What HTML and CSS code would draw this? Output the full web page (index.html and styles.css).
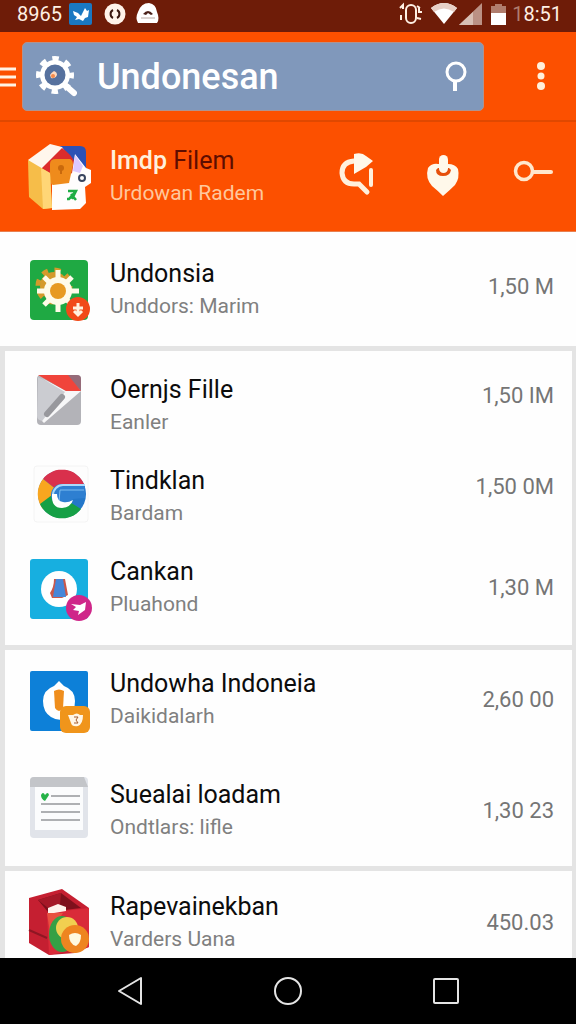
FILE: index.html
```html
<!DOCTYPE html>
<html lang="id">
<head>
<meta charset="utf-8">
<meta name="viewport" content="width=device-width, initial-scale=1">
<title>Undonesan</title>
<link rel="stylesheet" href="styles.css">
</head>
<body>
<div class="status">
  <span class="clock">8965</span>
  <svg class="status-left" width="92" height="26" viewBox="0 0 92 26" aria-hidden="true">
    <rect x="1" y="2" width="23" height="22" rx="2" fill="#1a78c2"/>
    <path d="M5 10l5 2 3 3 4-8 2 3 2-1-1 7-3 1-2 3-4-2-4 1 2-3-3-2z" fill="#fff"/>
    <circle cx="47" cy="13" r="10.500" fill="#fff3ea"/>
    <path d="M45 9a4.500 4.500 0 0 0 0 8M49 9a4.500 4.500 0 0 1 0 8" fill="none" stroke="#3a1810" stroke-width="2"/>
    <path d="M70 22q-3-5 0-11 3-9 11-9 7 1 8 9 3 7 0 11z" fill="#fff"/>
    <path d="M75 13q5-6 10 0l-2 1-3-2-2 2z" fill="#4a2018"/><path d="M73 17h14" stroke="#b8a8a2"/>
  </svg>
  <svg class="status-right" width="110" height="26" viewBox="0 0 110 26" aria-hidden="true">
    <g fill="none" stroke="#fff0e4" stroke-width="2"><rect x="9" y="4" width="10" height="18" rx="5"/><path d="M3 7l3-3v4M4 14v5M20 5l3 2M21 11h4M20 17l4 1M22 7v4"/></g>
    <path d="M34 7q13-10 26 0L47 23z" fill="#fff"/><path d="M34 7q13-10 26 0l-3 4q-10-7-20 0z" fill="#e8d0c6"/>
    <path d="M62 24L85 2v22z" fill="#bb9184"/><path d="M62 24l14-13v13z" fill="#d8bfb4"/>
    <path d="M94 5h4V3h7v2h4v19H94z" fill="#b07d6d"/><path d="M94 12h15v12H94z" fill="#fff"/>
  </svg>
  <span class="clock"><span class="faint">1</span>8:51</span>
</div>

<header class="appbar">
  <button class="menu" type="button" aria-label="Menu">
    <svg width="16" height="24" viewBox="0 0 16 24"><path d="M0 5h16M0 13h16M0 21h16" stroke="#fff3e4" stroke-width="3"/></svg>
  </button>
  <form class="search">
    <svg width="42" height="42" viewBox="0 0 42 42" aria-hidden="true">
      <circle cx="20" cy="20" r="12.500" fill="none" stroke="#fff" stroke-width="5"/>
      <circle cx="20" cy="20" r="16.500" fill="none" stroke="#fff" stroke-width="5" stroke-dasharray="6.500 6.460" stroke-dashoffset="3.200"/>
      <circle cx="20" cy="20" r="10.500" fill="#56719e"/>
      <path d="M31 31l8 7" stroke="#fff" stroke-width="6" stroke-linecap="round"/>
      <path d="M15 20q1-2 4-4 3 1 3 4-2 4-6 3z" fill="#ffd9bd"/><circle cx="18" cy="21" r="2" fill="#f58a4a"/>
    </svg>
    <input class="query" type="text" value="Undonesan" aria-label="Search">
    <button class="plain" type="submit" aria-label="Search">
      <svg width="24" height="32" viewBox="0 0 24 32"><circle cx="13" cy="12" r="9" fill="none" stroke="#fff" stroke-width="3"/><path d="M12 21v10" stroke="#fff" stroke-width="4"/></svg>
    </button>
  </form>
  <button class="more" type="button" aria-label="More options">
    <svg width="12" height="32" viewBox="0 0 12 32" fill="#fff0dc"><circle cx="6" cy="6" r="4"/><circle cx="6" cy="16" r="3.500"/><circle cx="6" cy="26" r="4"/></svg>
  </button>
</header>

<section class="banner">
  <svg class="icon" viewBox="0 0 66 80" aria-hidden="true">
    <path d="M34 9h20q6 0 6 6v25H46z" fill="#2d51b5"/>
    <path d="M2 23L24 7l12 3 14 20-34 9z" fill="#fff6ec"/>
    <path d="M15 32L36 11q9 6 13 15l-3 18-22 3z" fill="#dc2c2c"/>
    <path d="M26 46l20-10 3-19 11 14 5 2v13l-6 4 1 16-6 6-28 1z" fill="#fffdfd"/>
    <path d="M49 18l8 11-3 7-7-2z" fill="#dcc8ff"/>
    <path d="M24 27q0-5 6-5h14q3 1 3 6l-4 18-16 2q-3-1-3-5z" fill="#ef8b1c"/>
    <path d="M2 23l22 13 2 35-9 1L3 60z" fill="#f6bd49"/><path d="M15 31l9 5 2 35-9 1z" fill="#ffd676"/>
    <circle cx="35" cy="31" r="3" fill="#c9690c"/><path d="M35 32v5" stroke="#c9690c" stroke-width="2"/>
    <circle cx="56" cy="41" r="3" fill="none" stroke="#39455f" stroke-width="2"/>
    <path d="M42 54h8l-4 8M50 54l-7 8h-2M45 57l5 6" fill="none" stroke="#20ad45" stroke-width="2.500"/>
  </svg>
  <div class="text">
    <h1 class="title light">Imdp <span class="dark">Filem</span></h1>
    <p class="sub pale">Urdowan Radem</p>
  </div>
  <div class="actions">
    <button class="plain" type="button" aria-label="Refresh search">
      <svg width="48" height="52" viewBox="0 0 48 52"><path d="M20 10q-12 1-12 12 1 11 12 11h5l8 8" fill="none" stroke="#fff0dc" stroke-width="5" stroke-linecap="round"/><path d="M20 3q8-2 12 2l7 5-7 6-12 7z" fill="#fff8ea"/><path d="M37 19v15" stroke="#fff0dc" stroke-width="4" stroke-linecap="round"/></svg>
    </button>
    <button class="plain" type="button" aria-label="Install">
      <svg width="48" height="52" viewBox="0 0 48 52"><path d="M6 17q4-5 10-4h10q7 0 10 5 2 9-3 16-5 5-12 11-6-6-11-10-7-8-4-18z" fill="#fff8ea"/><path d="M14 19q0 6 7 6t8-6l-2-2h-11z" fill="#e64f0b"/><rect x="17" y="4" width="9" height="18" rx="4.500" fill="#fff8ea"/></svg>
    </button>
    <button class="plain" type="button" aria-label="Key">
      <svg width="48" height="52" viewBox="0 0 48 52"><circle cx="14" cy="20" r="8.500" fill="none" stroke="#ffe7cd" stroke-width="3.500"/><path d="M23 21h18" stroke="#ffe7cd" stroke-width="4" stroke-linecap="round"/></svg>
    </button>
  </div>
</section>

<main class="list">
  <ul class="card full">
    <li class="row">
      <svg class="icon" viewBox="0 0 66 80" aria-hidden="true">
        <rect x="4" y="10" width="58" height="60" rx="4" fill="#1fa943"/>
        <circle cx="28" cy="36" r="14" fill="#d59a2b"/><circle cx="28" cy="36" r="16" fill="none" stroke="#d59a2b" stroke-width="5" stroke-dasharray="6 6.560"/>
        <circle cx="32" cy="41" r="14" fill="#fffbe9"/>
        <path d="M32 20v42M11 41h42M18 27l28 28M46 27L18 55" stroke="#fffbe9" stroke-width="5"/>
        <circle cx="32" cy="41" r="8" fill="#e79a22"/>
        <circle cx="52" cy="59" r="12" fill="#f14a18"/><path d="M52 53v10M47 58h10M48 61l4 4 4-4" stroke="#fff2df" stroke-width="3" fill="none"/>
      </svg>
      <div class="text"><h2 class="title">Undonsia</h2><p class="sub">Unddors: Marim</p></div>
      <span class="price lifted">1,50 M</span>
    </li>
  </ul>

  <ul class="card tight">
    <li class="row">
      <svg class="icon" viewBox="0 0 66 80" aria-hidden="true">
        <rect x="11" y="9" width="44" height="50" rx="4" fill="#b3b3b8"/>
        <path d="M12 11l31 15-27 29q-5-1-5-5z" fill="#cbccd1"/>
        <path d="M12 10l28 15h15L18 57l-2-2 23-29z" fill="#f7f7f8"/>
        <path d="M21 48l15-17" stroke="#98989d" stroke-width="6" stroke-linecap="round"/>
        <path d="M40 9h11q4 0 4 4v12z" fill="#956b79"/><path d="M12 9h30l13 16H40z" fill="#f0443b"/>
      </svg>
      <div class="text"><h2 class="title">Oernjs Fille</h2><p class="sub">Eanler</p></div>
      <span class="price raised">1,50 IM</span>
    </li>
    <li class="row">
      <svg class="icon" viewBox="0 0 66 80" aria-hidden="true">
        <rect x="8" y="9" width="54" height="56" rx="3" fill="#fdfdfd" stroke="#f4f4f4"/>
        <circle cx="36" cy="37" r="24" fill="#2477c9"/>
        <path d="M36 37L17 22a24 24 0 0 1 41 5H36z" fill="#d9304c"/>
        <path d="M36 37L17 22a24 24 0 0 0 0 30z" fill="#f9a61f"/>
        <path d="M26 38L14 47a24 24 0 0 0 41 5L42 44z" fill="#16a046"/>
        <path d="M59 27H36a11 11 0 0 0 0 22q8 0 11-7l12-1z" fill="#2e7fd1"/>
        <path d="M59 28H37a10 10 0 0 0-10 10" fill="none" stroke="#a9dafa" stroke-width="2"/>
        <path d="M33 45l1-12h24" fill="none" stroke="#7cbdf0"/>
        <path d="M26 37q-1 14 10 14 9-1 11-8-5 3-10 2-6-1-6-8z" fill="#fff"/>
      </svg>
      <div class="text"><h2 class="title">Tindklan</h2><p class="sub">Bardam</p></div>
      <span class="price raised">1,50 0M</span>
    </li>
    <li class="row">
      <svg class="icon" viewBox="0 0 66 80" aria-hidden="true">
        <rect x="4" y="11" width="58" height="60" rx="3" fill="#17afe0"/>
        <circle cx="33" cy="41" r="18" fill="#fff"/>
        <path d="M28 31h11l3 16-6 3H26l-2-5q4-6 4-14z" fill="#cb5749"/><path d="M30 31h7l3 18H27z" fill="#4686d8"/>
        <circle cx="53" cy="60" r="13" fill="#cf2689"/><path d="M45 56l9 1 6-3-1 8-7 5 1-4-6-1 3-3z" fill="#fff"/>
      </svg>
      <div class="text"><h2 class="title">Cankan</h2><p class="sub">Pluahond</p></div>
      <span class="price">1,30 M</span>
    </li>
  </ul>

  <ul class="card loose">
    <li class="row">
      <svg class="icon" viewBox="0 0 66 80" aria-hidden="true">
        <rect x="4" y="11" width="58" height="60" rx="2" fill="#0d80d8"/>
        <path d="M33 21l5 5q11 4 11 15 0 12-8 17-8 4-16-1-8-5-8-16 0-11 11-15z" fill="#fff"/>
        <path d="M28 31q5-3 10 0l-1 17q-4 6-8 0z" fill="#ef8e1d"/>
        <rect x="34" y="46" width="30" height="27" rx="6" fill="#f0951b"/>
        <path d="M42 55h5q4-3 7 0h3q0 9-5 11-6 1-7-3z" fill="#fff6e6"/><path d="M48 57h4l-2 3 2 3h-4" fill="none" stroke="#a55c30"/>
      </svg>
      <div class="text"><h2 class="title">Undowha Indoneia</h2><p class="sub">Daikidalarh</p></div>
      <span class="price">2,60 00</span>
    </li>
    <li class="row">
      <svg class="icon" viewBox="0 0 66 80" aria-hidden="true">
        <rect x="4" y="6" width="58" height="61" rx="4" fill="#e1e4ea"/><path d="M8 6h50l4 10H4V10q0-4 4-4z" fill="#c3c5c9"/>
        <path d="M9 16h48v43H9z" fill="#fbfcfd"/>
        <path d="M25 25h29M15 33h39M15 41h39M15 49h39" stroke="#aeb0b3" stroke-width="2"/>
        <path d="M15 24q2-4 4 0 3-4 4 0l-4 6q-4-2-4-6z" fill="#25b348"/>
      </svg>
      <div class="text"><h2 class="title">Suealai loadam</h2><p class="sub">Ondtlars: lifle</p></div>
      <span class="price">1,30 23</span>
    </li>
  </ul>

  <ul class="card last">
    <li class="row">
      <svg class="icon" viewBox="0 0 66 80" aria-hidden="true">
        <path d="M3 15l33-9 27 19v39l-14 6-26 2L3 60z" fill="#c51f31"/>
        <path d="M21 30l42-5v39l-40 8z" fill="#d92b39"/><path d="M12 17l23-7 20 15-33 4z" fill="#7e101c"/>
        <path d="M12 17l23-7-1 12-12 3z" fill="#a51827"/><path d="M22 25l10-4 8 3v4l-18 3z" fill="#fff2ec"/>
        <path d="M3 47l18 8" stroke="#8f1623" stroke-width="2"/><path d="M21 30h16L24 50z" fill="#e8503f"/>
        <ellipse cx="36" cy="51" rx="13" ry="18" fill="#35a045"/><circle cx="41" cy="45" r="11" fill="#f1cf50"/>
        <circle cx="49" cy="56" r="14" fill="#ee8520"/><path d="M43 52q6-4 12 0 0 8-5 11-7-2-7-11z" fill="#fff9df"/>
      </svg>
      <div class="text"><h2 class="title">Rapevainekban</h2><p class="sub">Varders Uana</p></div>
      <span class="price">450.03</span>
    </li>
  </ul>
</main>

<nav class="nav">
  <button class="plain" type="button" aria-label="Back"><svg width="32" height="32" viewBox="0 0 32 32"><path d="M27 3v26L5 16z" fill="none" stroke="#e4e4e4" stroke-width="2" stroke-linejoin="round"/></svg></button>
  <button class="plain" type="button" aria-label="Home"><svg width="32" height="32" viewBox="0 0 32 32"><circle cx="16" cy="16" r="13" fill="none" stroke="#e4e4e4" stroke-width="2"/></svg></button>
  <button class="plain" type="button" aria-label="Recent apps"><svg width="32" height="32" viewBox="0 0 32 32"><rect x="4" y="4" width="24" height="24" rx="1" fill="none" stroke="#e4e4e4" stroke-width="2"/></svg></button>
</nav>
</body>
</html>
```
FILE: styles.css
```css
* {
  box-sizing: border-box;
}

body {
  margin: 0;
  height: 100vh;
  display: flex;
  flex-direction: column;
  overflow: hidden;
  font-family: Roboto, "Liberation Sans", sans-serif;
  background: #e4e4e4;
  color: #0c0c0c;
}

h1, h2, p, ul {
  margin: 0;
  padding: 0;
}

button {
  border: 0;
  padding: 0;
  background: none;
  cursor: pointer;
}

svg {
  display: block;
  flex: none;
}

.status {
  flex: none;
  display: flex;
  align-items: center;
  height: 32px;
  padding: 0 14px 4px 17px;
  background: #6e1c08;
  color: #fff0e4;
}

.clock {
  font-size: 20px;
  line-height: 26px;
}

.faint {
  color: #b07d6d;
}

.status-left {
  margin-left: 6px;
}

.status-right {
  margin-left: auto;
  margin-right: 5px;
}

.appbar {
  flex: none;
  display: flex;
  align-items: center;
  height: 90px;
  background: #fc5000;
  border-bottom: 2px solid #e04800;
}

.menu {
  margin-right: 6px;
}

.search {
  flex: 1;
  min-width: 0;
  display: flex;
  align-items: center;
  height: 69px;
  padding: 0 16px 0 12px;
  background: #8098bb;
  border: 1px solid #b0938f;
  border-radius: 5px;
}

.query {
  flex: 1;
  min-width: 0;
  margin-left: 20px;
  padding: 2px 0 0;
  border: 0;
  outline: 0;
  background: none;
  color: #fff;
  font: 500 36px/48px Roboto, "Liberation Sans", sans-serif;
}

.more {
  display: flex;
  justify-content: center;
  width: 92px;
  padding-left: 22px;
}

.banner {
  flex: none;
  display: flex;
  align-items: center;
  gap: 18px;
  height: 110px;
  padding: 0 18px 0 26px;
  background: #fc5000;
  border-bottom: 1px solid #e88050;
}

.icon {
  width: 66px;
  height: 80px;
}

.text {
  flex: 1;
  min-width: 0;
  padding-bottom: 2px;
}

.title {
  font-size: 25px;
  line-height: 34px;
  font-weight: 400;
  white-space: nowrap;
}

.sub {
  font-size: 21px;
  line-height: 30px;
  color: #808080;
  white-space: nowrap;
}

.light {
  color: #fff0dc;
  font-weight: 500;
}

.dark {
  color: #5e0d00;
  font-weight: 400;
}

.pale {
  color: #ffc79c;
}

.actions {
  display: flex;
  gap: 40px;
}

.list {
  flex: 1;
  min-height: 0;
  overflow: hidden;
  display: flex;
  flex-direction: column;
  gap: 5px;
}

.card {
  flex: none;
  display: flex;
  flex-direction: column;
  margin: 0 4px 0 5px;
  padding: 15px 18px 17px 21px;
  background: #fefefe;
  list-style: none;
}

.full {
  margin: 0;
  padding: 18px 22px 16px 26px;
}

.tight {
  gap: 11px;
}

.loose {
  gap: 31px;
  padding-top: 10px;
  padding-bottom: 15px;
}

.last {
  padding-top: 12px;
}

.row {
  display: flex;
  align-items: center;
  gap: 18px;
  height: 80px;
}

.price {
  font-size: 22px;
  line-height: 30px;
  color: #757575;
  white-space: nowrap;
}

.lifted {
  padding-bottom: 6px;
}

.raised {
  padding-bottom: 20px;
}

.nav {
  flex: none;
  display: flex;
  align-items: center;
  justify-content: center;
  gap: 126px;
  height: 66px;
  background: #000;
}
```
